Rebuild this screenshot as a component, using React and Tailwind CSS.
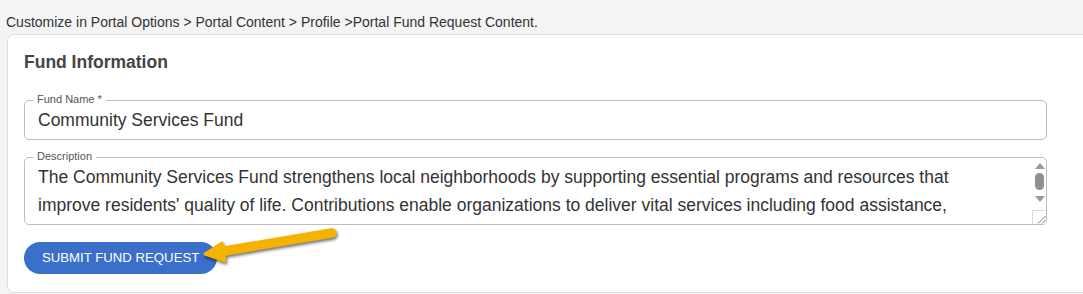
import React from "react";

function Arrow() {
  return (
    <svg
      className="absolute left-[195px] top-[222px] pointer-events-none"
      width="150"
      height="50"
      viewBox="0 0 150 50"
      style={{ filter: "drop-shadow(1px 2px 1.5px rgba(0,0,0,0.55))" }}
    >
      <line x1="137" y1="11" x2="24" y2="30" stroke="#f5b301" strokeWidth="9.5" strokeLinecap="round" />
      <polygon points="10,32 27,21 30,39" fill="#f5b301" stroke="#f5b301" strokeWidth="3" strokeLinejoin="round" />
    </svg>
  );
}

function Scrollbar() {
  return (
    <div className="flex flex-col items-center w-[13px] shrink-0 h-full">
      <div className="mt-[5px] w-0 h-0 border-l-[5px] border-r-[5px] border-b-[6px] border-l-transparent border-r-transparent border-b-[#9a9a9a]" />
      <div className="mt-[4px] w-[9px] h-[17px] rounded-full bg-[#8f8f8f]" />
      <div className="mt-[6px] w-0 h-0 border-l-[5px] border-r-[5px] border-t-[6px] border-l-transparent border-r-transparent border-t-[#9a9a9a]" />
      <div className="mt-auto w-[14px] h-[14px] self-end border-l border-t border-[#dcdcdc] bg-white flex items-end justify-end">
        <svg width="9" height="9" viewBox="0 0 9 9">
          <line x1="8.5" y1="1" x2="1" y2="8.5" stroke="#6b6b6b" strokeWidth="0.9" />
          <line x1="8.5" y1="5" x2="5" y2="8.5" stroke="#6b6b6b" strokeWidth="0.9" />
        </svg>
      </div>
    </div>
  );
}

export default function App() {
  return (
    <div
      className="relative w-[1083px] h-[294px] overflow-hidden bg-[#f4f4f4] text-[#333]"
      style={{ fontFamily: '"Liberation Sans", Arial, sans-serif' }}
    >
      <div className="pt-[14px] pl-[6px] text-[14px] leading-[16px] text-[#333]">
        Customize in Portal Options &gt; Portal Content &gt; Profile &gt;Portal Fund Request Content.
      </div>
      <div className="mt-[4px] ml-[7px] w-[1090px] h-[259px] bg-white border border-[#dedede] rounded-[7px] pl-[16px] pt-[17px]">
        <h2 className="text-[17.5px] leading-[21px] font-bold text-[#444]">Fund Information</h2>

        <div className="relative mt-[27px] w-[1023px] h-[40px] border border-[#bdbdbd] rounded-[5px] pl-[13px] flex items-center">
          <span className="absolute left-[8px] -top-[8px] px-[4px] bg-white text-[11px] leading-[13px] text-[#555]">
            Fund Name *
          </span>
          <span className="text-[17.5px] leading-[22px] text-[#333]">Community Services Fund</span>
        </div>

        <div className="relative mt-[17px] w-[1023px] h-[68px] border border-[#bdbdbd] rounded-[5px] pl-[13px] flex">
          <span className="absolute left-[8px] -top-[8px] px-[4px] bg-white text-[11px] leading-[13px] text-[#555]">
            Description
          </span>
          <div className="flex-1 pt-[5px] overflow-hidden text-[17.5px] leading-[28px] text-[#333]">
            <div className="whitespace-nowrap">
              The Community Services Fund strengthens local neighborhoods by supporting essential programs and resources that
            </div>
            <div className="whitespace-nowrap">
              improve residents' quality of life. Contributions enable organizations to deliver vital services including food assistance,
            </div>
          </div>
          <Scrollbar />
        </div>

        <button className="mt-[17px] h-[32px] px-[18px] rounded-full bg-[#3a6fca] text-white text-[13.2px] leading-[16px]">
          SUBMIT FUND REQUEST
        </button>
      </div>
      <Arrow />
    </div>
  );
}
